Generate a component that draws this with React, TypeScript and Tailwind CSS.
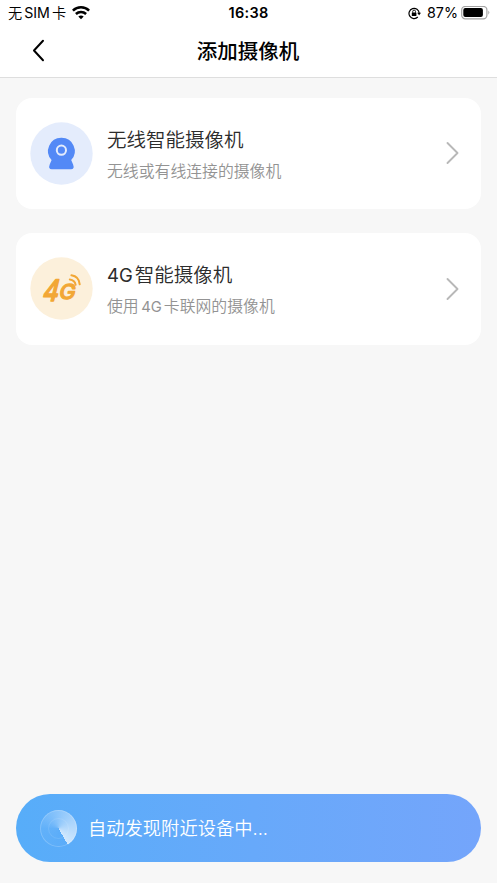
import type { ReactNode } from 'react';

function WifiIcon() {
  return (
    <svg className="ml-[6px] h-[14px] w-[18px]" viewBox="0 0 18 14" fill="none" stroke="#000" strokeWidth="2.5">
      <path d="M.9 4.7C5.4 .2 12.6 .2 17.1 4.7" />
      <path d="M3.9 8C6.8 5.2 11.2 5.2 14.1 8" />
      <path d="M9 13.2 6.3 10.5Q9 8.3 11.7 10.5Z" fill="#000" stroke="none" />
    </svg>
  );
}

function RotationLockIcon() {
  return (
    <svg className="h-[13px] w-[13px]" viewBox="0 0 13 13" fill="none" stroke="#000" strokeWidth="1.2">
      <path d="M9.8 10A5.1 5.1 0 1 1 11.2 6.2" />
      <path d="M9.1 5.7H13L11.1 8.2Z" fill="#000" stroke="none" />
      <rect x="3.8" y="5.5" width="4.6" height="3.5" rx=".5" fill="#000" stroke="none" />
      <path d="M4.7 5.7V4.5a1.4 1.4 0 0 1 2.8 0V5.7" strokeWidth=".9" />
    </svg>
  );
}

function BatteryIcon() {
  return (
    <svg className="ml-[3px] h-[14px] w-[29px]" viewBox="0 0 29 14">
      <rect x=".7" y=".4" width="25.2" height="12.4" rx="3.6" fill="none" stroke="#a3a3a3" strokeWidth="1.2" />
      <rect x="2.3" y="2.1" width="19.6" height="9" rx="2" />
      <path d="M27.3 4.5q2 2.1 0 4.2Z" fill="#a3a3a3" />
    </svg>
  );
}

function CameraIcon() {
  return (
    <svg className="h-[63px] w-[63px]" viewBox="0 0 63 63">
      <circle cx="31.5" cy="31.5" r="31.2" fill="#e4ecfc" />
      <path
        d="M31.4 15.8A13.2 13.2 0 0 0 21.6 38L19.7 42.4Q18 47.2 21.8 47.2H41Q44.8 47.2 43.1 42.4L41.2 38A13.2 13.2 0 0 0 31.4 15.8Z"
        fill="#5389f6"
      />
      <circle cx="31.4" cy="28.2" r="4.6" fill="none" stroke="#e4ecfc" strokeWidth="2" />
    </svg>
  );
}

function FourGIcon() {
  return (
    <svg className="h-[63px] w-[63px]" viewBox="0 0 63 63">
      <circle cx="31.5" cy="31.5" r="31.2" fill="#fcf0db" />
      <g
        fill="#f2a735"
        stroke="#f2a735"
        strokeLinejoin="round"
        className="font-['Inter'] font-medium"
      >
        <text transform="translate(11.3 44.4) skewX(-14) scale(.83 1)" fontSize="29.5" strokeWidth="1.5">4</text>
        <text transform="translate(28.2 42.4) skewX(-11) scale(1.06 1)" fontSize="20.5" strokeWidth="1.2">G</text>
      </g>
      <g fill="none" stroke="#f2a735" strokeWidth="2" strokeLinecap="round">
        <path d="M41.4 18.3C46.1 19 49.3 22.6 49.7 27.3" />
        <path d="M39.8 22.4C43.2 22.8 45.2 24.8 45.6 27.8" />
      </g>
    </svg>
  );
}

function RadarIcon() {
  return (
    <div className="relative h-[37px] w-[37px] rounded-full bg-[conic-gradient(from_150deg,rgba(255,255,255,0)_0deg,rgba(255,255,255,0.05)_120deg,rgba(255,255,255,0.4)_245deg,rgba(255,255,255,0.72)_360deg)] inset-ring inset-ring-white/20">
      <div className="absolute inset-[8px] rounded-full border border-white/10" />
    </div>
  );
}

function DeviceCard({ icon, title, subtitle }: { icon: ReactNode; title: ReactNode; subtitle: ReactNode }) {
  return (
    <button className="flex h-[111.5px] w-full items-center rounded-[16px] bg-white pr-[22px] pl-[14px] text-left">
      {icon}
      <div className="ml-[14px] flex-1 pt-[2px] whitespace-nowrap">
        <div className="h-[28px] text-[19.5px] leading-[28px] font-[350] text-[#2c2c2c]">{title}</div>
        <div className="mt-[7px] h-[22px] text-[15.85px] leading-[22px] font-[350] text-[#939393]">{subtitle}</div>
      </div>
      <svg className="h-[24px] w-[14px]" viewBox="0 0 14 24" fill="none" stroke="#b8b8b8" strokeWidth="1.9" strokeLinecap="round" strokeLinejoin="round">
        <path d="M2.5 2 12.5 12 2.5 22" />
      </svg>
    </button>
  );
}

export default function App() {
  return (
    <div className="flex h-[883px] w-[497px] flex-col overflow-hidden bg-[#f7f7f7] font-['Inter','Noto_Sans_CJK_SC',sans-serif]">
      <header className="h-[78px] border-b border-[#dedede] bg-white text-black">
        <div className="grid h-[26px] grid-cols-3 items-center text-[14.5px]">
          <div className="flex items-center pl-[8px] whitespace-nowrap">
            <span className="text-[14.2px] font-[350]">无<span className="mx-[2px] font-normal">SIM</span>卡</span>
            <WifiIcon />
          </div>
          <div className="text-center text-[14.5px] font-semibold tracking-[0.3px]">16:38</div>
          <div className="flex items-center justify-end pr-[7px]">
            <RotationLockIcon />
            <span className="ml-[6px] text-[14.3px]">87%</span>
            <BatteryIcon />
          </div>
        </div>
        <div className="grid h-[50px] grid-cols-[66px_1fr_66px] items-center">
          <button className="pl-[32px]" aria-label="返回">
            <svg className="h-[24px] w-[14px]" viewBox="0 0 14 24" fill="none" stroke="#000" strokeWidth="2" strokeLinecap="round" strokeLinejoin="round">
              <path d="M11 1.8 2 11.5 11 21.2" />
            </svg>
          </button>
          <h1 className="pt-px pr-px text-center text-[20.5px] leading-[30px] font-medium">添加摄像机</h1>
        </div>
      </header>
      <main className="flex flex-1 flex-col gap-6 px-4 pt-[19.5px] pb-[21px]">
        <DeviceCard icon={<CameraIcon />} title="无线智能摄像机" subtitle="无线或有线连接的摄像机" />
        <DeviceCard
          icon={<FourGIcon />}
          title={<><span className="mr-[2px] text-[18.5px] leading-none font-normal">4G</span>智能摄像机</>}
          subtitle={<>使用<span className="mr-[2px] ml-[2.5px] text-[14.8px] leading-none font-normal">4G</span>卡联网的摄像机</>}
        />
        <div className="mt-auto flex h-[68px] items-center rounded-full bg-linear-to-r from-[#57adf9] to-[#74a5fb] pl-[24px]">
          <RadarIcon />
          <span className="ml-[11px] pt-[2px] text-[18.3px] font-[350] text-white">自动发现附近设备中...</span>
        </div>
      </main>
    </div>
  );
}
